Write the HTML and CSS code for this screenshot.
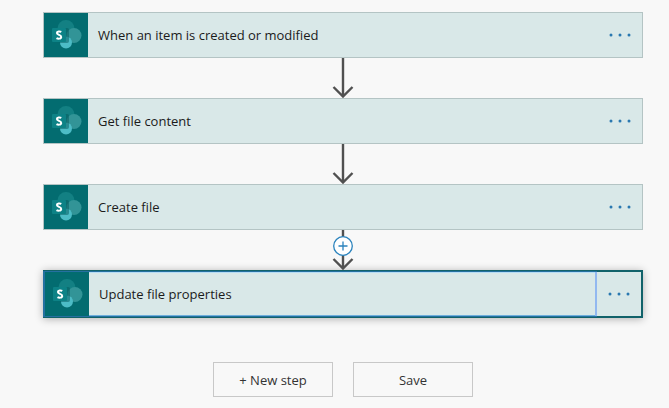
FILE: index.html
```
<!DOCTYPE html>
<html lang="en">
<head>
    <meta charset="UTF-8">
    <meta name="viewport" content="width=device-width, initial-scale=1.0">
    <title>Flow designer</title>
    <link rel="stylesheet" href="styles.css">
</head>
<body>
    <svg class="symbols" aria-hidden="true">
        <symbol id="sharepoint" viewBox="0 0 44 44">
            <circle cx="22" cy="15.500" r="8.500" fill="#138083"/>
            <circle cx="30" cy="22.500" r="7.500" fill="#329497"/>
            <circle cx="22" cy="29.500" r="6" fill="#4cbcc6"/>
            <path d="M14 15h9a2 2 0 0 1 2 2v11a2 2 0 0 1-2 2h-7z" fill="#04585b" opacity="0.5"/>
            <rect x="8" y="15" width="14" height="14" rx="1" fill="#0d8286"/>
            <path d="M17.300 18.900c-1.200-.6-4.400-.8-4.400 1.200 0 2 4.300 1.600 4.300 3.800 0 2.200-3.400 2-4.700 1.200" fill="none" stroke="#fff" stroke-width="2"/>
        </symbol>
        <symbol id="arrow" viewBox="0 0 24 40">
            <path d="M12 0v38M2.500 29l9.500 9.500 9.500-9.500" fill="none" stroke="#505050" stroke-width="2.400"/>
        </symbol>
        <symbol id="dots" viewBox="0 0 22 4">
            <circle cx="2" cy="2" r="1.500"/>
            <circle cx="11" cy="2" r="1.500"/>
            <circle cx="20" cy="2" r="1.500"/>
        </symbol>
    </svg>

    <main class="designer">
        <div class="card">
            <button class="card-title">
                <span class="card-icon"><svg><use href="#sharepoint"/></svg></span>
                <span class="card-name">When an item is created or modified</span>
            </button>
            <button class="card-menu" aria-label="Menu"><svg><use href="#dots"/></svg></button>
        </div>

        <div class="connector"><svg class="arrow"><use href="#arrow"/></svg></div>

        <div class="card">
            <button class="card-title">
                <span class="card-icon"><svg><use href="#sharepoint"/></svg></span>
                <span class="card-name">Get file content</span>
            </button>
            <button class="card-menu" aria-label="Menu"><svg><use href="#dots"/></svg></button>
        </div>

        <div class="connector"><svg class="arrow"><use href="#arrow"/></svg></div>

        <div class="card">
            <button class="card-title">
                <span class="card-icon"><svg><use href="#sharepoint"/></svg></span>
                <span class="card-name">Create file</span>
            </button>
            <button class="card-menu" aria-label="Menu"><svg><use href="#dots"/></svg></button>
        </div>

        <div class="connector">
            <svg class="arrow"><use href="#arrow"/></svg>
            <button class="insert" aria-label="Insert a new step">
                <svg viewBox="0 0 20 20"><circle cx="10" cy="10" r="9.300"/><path d="M10 5.500v9M5.500 10h9"/></svg>
            </button>
        </div>

        <div class="card selected">
            <button class="card-title">
                <span class="card-icon"><svg><use href="#sharepoint"/></svg></span>
                <span class="card-name">Update file properties</span>
            </button>
            <button class="card-menu" aria-label="Menu"><svg><use href="#dots"/></svg></button>
        </div>

        <div class="actions">
            <button class="action">+ New step</button>
            <button class="action">Save</button>
        </div>
    </main>
</body>
</html>
```
FILE: styles.css
```
* {
    box-sizing: border-box;
}

body {
    margin: 0;
    background-color: #f8f8f8;
    color: #1b1b1b;
    font-family: "Open Sans", "Noto Sans", sans-serif;
    font-size: 13px;
    line-height: 20px;
}

button {
    margin: 0;
    padding: 0;
    border: none;
    background: none;
    color: inherit;
    font: inherit;
    cursor: pointer;
}

svg {
    display: block;
}

.symbols {
    display: none;
}

.designer {
    display: flex;
    flex-direction: column;
    padding: 12px 26px 8px 43px;
}

.card {
    display: flex;
    border: 1px solid #b4c4c4;
    background-color: #d9e8e8;
}

.card-title {
    flex: 1;
    display: flex;
    align-items: center;
    gap: 10px;
    text-align: left;
}

.card-icon {
    background-color: #036c70;
}

.card-icon svg {
    width: 44px;
    height: 44px;
}

.card-menu {
    display: flex;
    align-items: center;
    justify-content: center;
    width: 44px;
    fill: #2a78b0;
}

.card-menu svg {
    width: 22px;
    height: 4px;
}

.selected {
    border: 2px solid #11626a;
    box-shadow: 0 1px 8px rgba(0, 0, 0, 0.3);
}

/* focus ring round the title part */
.selected .card-title {
    border-right: 2px solid #92b8f0;
    box-shadow: -1px 0 0 1px #2470a0, inset 0 1px 0 #b5dcf5, inset 0 -1px 0 #6fb0dc;
}

.connector {
    position: relative;
    display: flex;
    justify-content: center;
}

.arrow {
    width: 24px;
    height: 40px;
}

.insert {
    position: absolute;
    top: 6px;
}

.insert svg {
    width: 20px;
    height: 20px;
    fill: #fff;
    stroke: #2b83bd;
    stroke-width: 1.3;
}

.actions {
    display: flex;
    justify-content: center;
    gap: 20px;
    margin-top: 44px;
}

.action {
    width: 120px;
    height: 35px;
    border: 1px solid #c8c8c8;
    color: #333;
}
```
